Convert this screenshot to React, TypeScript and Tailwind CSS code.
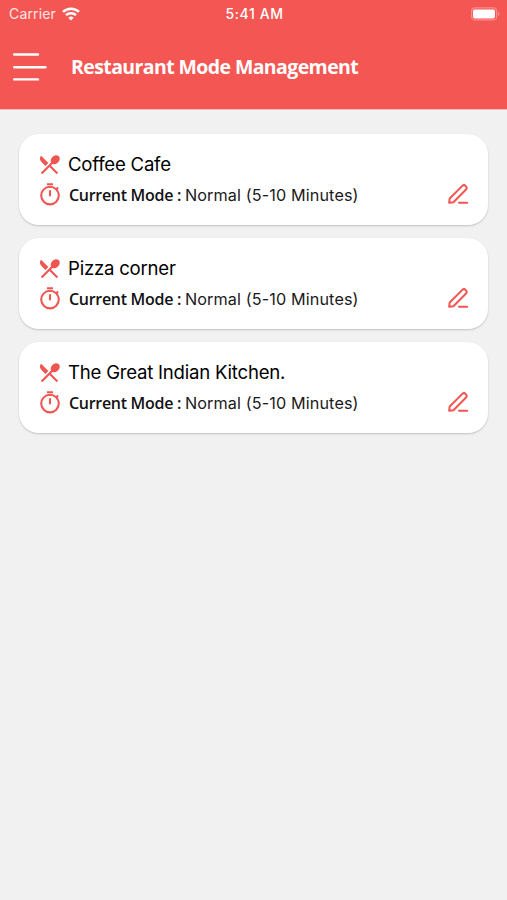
import React from 'react'
import { MdRestaurantMenu } from 'react-icons/md'

interface IRestaurant {
  id: number
  name: string
  mode: string
}

const restaurants: IRestaurant[] = [
  { id: 1, name: 'Coffee Cafe', mode: 'Normal (5-10 Minutes)' },
  { id: 2, name: 'Pizza corner', mode: 'Normal (5-10 Minutes)' },
  { id: 3, name: 'The Great Indian Kitchen.', mode: 'Normal (5-10 Minutes)' },
]

function WifiIcon() {
  return (
    <svg className="h-[14px] w-[18px]" viewBox="0 0 18 14" fill="none" stroke="white" strokeWidth="2.5">
      <path d="M1 4.9a11.6 11.6 0 0 1 16 0" />
      <path d="M4 8.2a7.2 7.2 0 0 1 10 0" />
      <path d="M9 13.6 6.3 10.8a3.9 3.9 0 0 1 5.4 0Z" fill="white" stroke="none" />
    </svg>
  )
}

function BatteryIcon() {
  return (
    <svg className="h-[14px] w-[30px]" viewBox="0 0 30 14" fill="none">
      <rect x="1.6" y="0.9" width="25" height="12" rx="3.5" stroke="#f98d8b" strokeWidth="1.2" />
      <rect x="3" y="2.4" width="22" height="9" rx="1.8" fill="white" />
      <path d="M27.9 4.8v4.4c1-.4 1.5-1.2 1.5-2.2s-.5-1.8-1.5-2.2Z" fill="#f98d8b" />
    </svg>
  )
}

function MenuIcon() {
  return (
    <svg className="h-[30px] w-[34px]" viewBox="0 0 34 30" stroke="white" strokeWidth="2.4" strokeLinecap="round">
      <path d="M1.2 2.5h23.8M1.2 15.2h31.3M1.2 27.4h23.8" />
    </svg>
  )
}

function TimerIcon() {
  return (
    <svg className="h-6 w-[22px]" viewBox="0 0 22 24" fill="none" stroke="#f05552" strokeWidth="2.1">
      <circle cx="11" cy="13.6" r="8.8" />
      <path d="M8 2.2h6M11 8.3v6M17.2 7.4l1.9-1.9" />
    </svg>
  )
}

function EditIcon() {
  return (
    <svg
      className="size-[22px]"
      viewBox="0 0 22 22"
      fill="none"
      stroke="#f05552"
      strokeWidth="2"
      strokeLinecap="round"
      strokeLinejoin="round"
    >
      <path d="M2.2 19.8l.5-4.3L15.1 3.1a2.6 2.6 0 0 1 3.7 3.7L6.4 19.2Z" />
      <path d="M12 19.8h8.2" />
    </svg>
  )
}

function StatusBar() {
  return (
    <div className="grid h-[27px] grid-cols-3 items-center pr-[7px] pl-[9px] text-[14px] text-white">
      <div className="flex items-center gap-[6px]">
        <span className="tracking-[0.15px] text-[#ffe6e5]">Carrier</span>
        <WifiIcon />
      </div>
      <span className="text-center font-medium tracking-[0.6px]">5:41 AM</span>
      <div className="flex justify-end">
        <BatteryIcon />
      </div>
    </div>
  )
}

function Header() {
  return (
    <header className="h-[110px] border-b border-[#f9bbb9] bg-[#f45653]">
      <StatusBar />
      <div className="flex h-20 items-center pl-[13px]">
        <button aria-label="Menu">
          <MenuIcon />
        </button>
        <h1 className="ml-6 font-['Open_Sans',sans-serif] text-[19.5px] font-bold tracking-[-0.6px] whitespace-nowrap text-white">
          Restaurant Mode Management
        </h1>
      </div>
    </header>
  )
}

function RestaurantCard({ restaurant }: { restaurant: IRestaurant }) {
  return (
    <div className="flex h-[91px] flex-col rounded-[20px] bg-white pt-4 pr-[19px] pl-5 shadow-[0_1px_2px_rgba(0,0,0,0.2)]">
      <div className="flex h-7 items-center">
        <MdRestaurantMenu className="-ml-[2px] size-[25px] text-[#f05552]" />
        <h2 className="ml-[6px] pt-px text-[18.6px] tracking-[-0.23px] text-black">{restaurant.name}</h2>
      </div>
      <div className="flex h-8 items-center">
        <TimerIcon />
        <p className="ml-2 pt-[2px] text-[16.2px] tracking-[0.12px] whitespace-nowrap text-[#1a1a1a]">
          <span className="font-['Open_Sans',sans-serif] text-[16px] font-semibold tracking-[-0.3px] text-[#111]">
            Current Mode :{' '}
          </span>
          {restaurant.mode}
        </p>
        <button className="ml-auto" aria-label="Edit mode">
          <EditIcon />
        </button>
      </div>
    </div>
  )
}

function App() {
  return (
    <div className="min-h-screen bg-[#f1f1f1] font-['Inter',sans-serif]">
      <Header />
      <main className="flex flex-col gap-[13px] px-[19px] pt-6">
        {restaurants.map((restaurant) => (
          <RestaurantCard key={restaurant.id} restaurant={restaurant} />
        ))}
      </main>
    </div>
  )
}

export default App
